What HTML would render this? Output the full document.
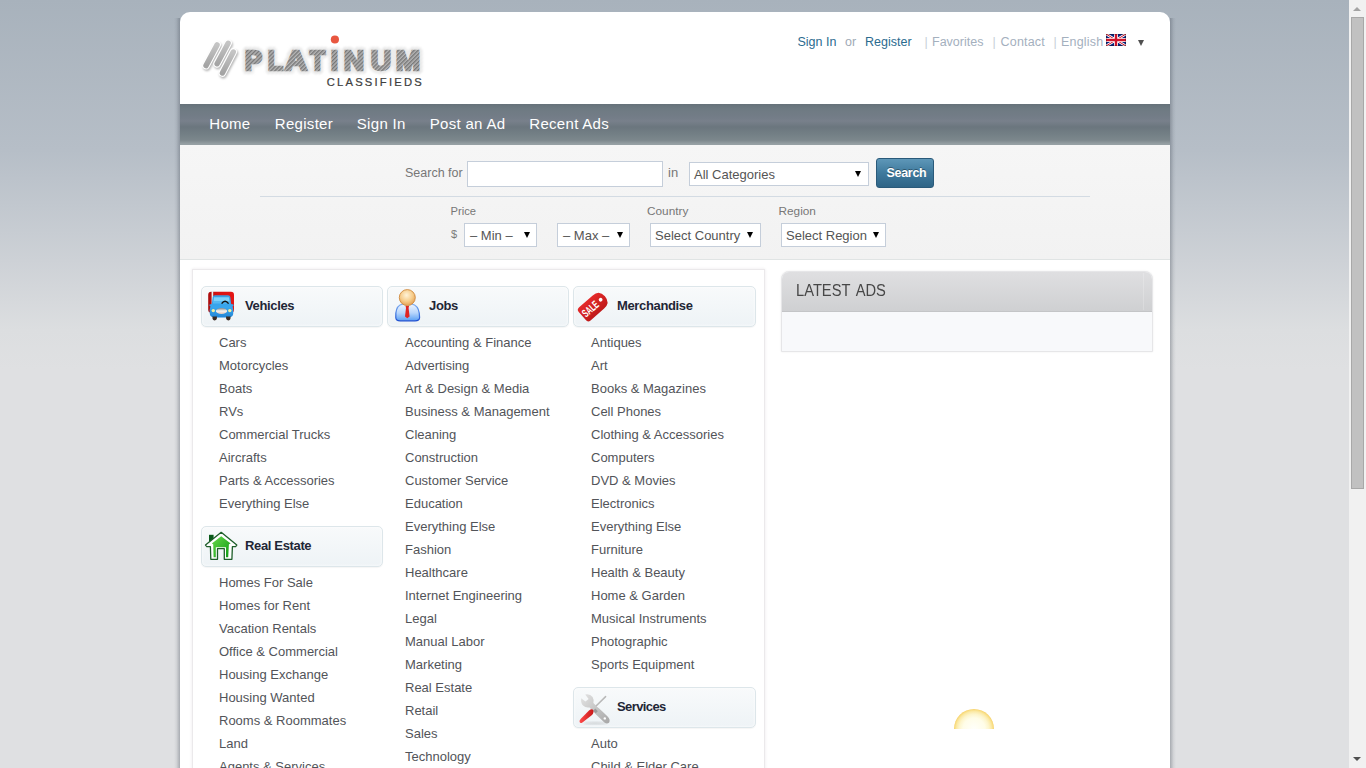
<!DOCTYPE html><html><head><meta charset="utf-8"><title>Platinum Classifieds</title><style>
html,body{margin:0;padding:0;}
body{width:1366px;height:768px;overflow:hidden;position:relative;font-family:"Liberation Sans",sans-serif;
 background:linear-gradient(to bottom,#a8b2bc 0px,#b6bec7 150px,#cdd1d6 260px,#dcdee0 330px,#dfe0e2 370px,#dfe0e2 768px);}
.t{position:absolute;white-space:nowrap;}
.abs{position:absolute;}
#wrap{position:absolute;left:180px;top:12px;width:990px;height:800px;background:#fff;border-radius:10px 10px 0 0;}
.shl{position:absolute;left:174px;top:18px;width:6px;height:760px;background:linear-gradient(to right,rgba(70,78,90,0),rgba(70,78,90,.08) 40%,rgba(70,78,90,.36));}
.shr{position:absolute;left:1170px;top:18px;width:6px;height:760px;background:linear-gradient(to left,rgba(70,78,90,0),rgba(70,78,90,.08) 40%,rgba(70,78,90,.36));}
#nav{position:absolute;left:180px;top:104px;width:990px;height:41px;
 background:linear-gradient(to bottom,#66727a 0px,#6e7a82 5px,#747d88 14px,#78808b 17px,#6b767e 23px,#737f85 30px,#7c878c 36px,#96a0a4 40px,#96a0a4 41px);}
#search{position:absolute;left:180px;top:145px;width:990px;height:114px;background:linear-gradient(#f6f6f6,#f2f2f2);border-bottom:1px solid #e0e4e4;}
.inp{position:absolute;background:#fff;border:1px solid #c5ceda;box-sizing:border-box;}
.sel{position:absolute;background:#fff;border:1px solid #c5ceda;box-sizing:border-box;}
.arr{position:absolute;width:0;height:0;border-left:3.5px solid transparent;border-right:3.5px solid transparent;border-top:6px solid #000;}
.panel{position:absolute;left:192px;top:269px;width:573px;height:600px;background:#fff;border:1px solid #ebe9eb;box-sizing:border-box;box-shadow:0 0 3px rgba(60,30,60,.1);}
.hdr{position:absolute;width:182px;height:41px;box-sizing:border-box;border:1px solid #dde6ea;border-radius:5px;
 background:linear-gradient(#f8fafb,#eef3f6);box-shadow:inset 0 0 3px rgba(255,255,255,.9), 0 1px 1px rgba(0,0,0,.04);}
</style></head><body>
<div class="shl"></div><div class="shr"></div><div id="wrap"></div>
<svg class="abs" style="left:196px;top:30px;" width="240" height="64" viewBox="0 0 240 64"><defs>
<pattern id="stp" patternUnits="userSpaceOnUse" width="2.8" height="2.8" patternTransform="rotate(45)">
<rect width="2.8" height="2.8" fill="#b4b4b4"/><rect width="1.3" height="2.8" fill="#767676"/></pattern>
<pattern id="stp2" patternUnits="userSpaceOnUse" width="2.8" height="2.8" patternTransform="rotate(45)">
<rect width="2.8" height="2.8" fill="#ffffff"/><rect width="1.3" height="2.8" fill="#d0d0d0"/></pattern>
<filter id="bl" x="-20%" y="-50%" width="140%" height="200%"><feGaussianBlur stdDeviation="1.3"/></filter>
<filter id="sh" x="-50%" y="-50%" width="200%" height="200%"><feGaussianBlur stdDeviation="1.1"/></filter>
<linearGradient id="barg" x1="0" y1="0" x2="0" y2="1"><stop offset="0" stop-color="#c4c4c4"/><stop offset="1" stop-color="#a4a4a4"/></linearGradient>
</defs>
<g font-family="Liberation Sans" font-weight="bold" font-size="27.6" fill="url(#stp2)" stroke="url(#stp2)" stroke-width="8" stroke-linejoin="round" filter="url(#bl)"><text x="48.8" y="40.099999999999994" textLength="17.4" lengthAdjust="spacingAndGlyphs">P</text><text x="71.8" y="40.099999999999994" textLength="15.4" lengthAdjust="spacingAndGlyphs">L</text><text x="88.8" y="40.099999999999994" textLength="22.4" lengthAdjust="spacingAndGlyphs">A</text><text x="113.8" y="40.099999999999994" textLength="15.4" lengthAdjust="spacingAndGlyphs">T</text><text x="134.8" y="40.099999999999994" textLength="7.4" lengthAdjust="spacingAndGlyphs">I</text><text x="147.8" y="40.099999999999994" textLength="20.4" lengthAdjust="spacingAndGlyphs">N</text><text x="174.8" y="40.099999999999994" textLength="20.4" lengthAdjust="spacingAndGlyphs">U</text><text x="199.8" y="40.099999999999994" textLength="24.4" lengthAdjust="spacingAndGlyphs">M</text></g>
<g font-family="Liberation Sans" font-weight="bold" font-size="27.6" fill="url(#stp)" stroke="url(#stp)" stroke-width="2.4" stroke-linejoin="miter"><text x="48.8" y="40.099999999999994" textLength="17.4" lengthAdjust="spacingAndGlyphs">P</text><text x="71.8" y="40.099999999999994" textLength="15.4" lengthAdjust="spacingAndGlyphs">L</text><text x="88.8" y="40.099999999999994" textLength="22.4" lengthAdjust="spacingAndGlyphs">A</text><text x="113.8" y="40.099999999999994" textLength="15.4" lengthAdjust="spacingAndGlyphs">T</text><text x="134.8" y="40.099999999999994" textLength="7.4" lengthAdjust="spacingAndGlyphs">I</text><text x="147.8" y="40.099999999999994" textLength="20.4" lengthAdjust="spacingAndGlyphs">N</text><text x="174.8" y="40.099999999999994" textLength="20.4" lengthAdjust="spacingAndGlyphs">U</text><text x="199.8" y="40.099999999999994" textLength="24.4" lengthAdjust="spacingAndGlyphs">M</text></g>
<g stroke-linecap="round">
<g filter="url(#sh)" stroke="#000" stroke-opacity=".3" stroke-width="7.5"><line x1="11" y1="37.2" x2="22" y2="16.5"/><line x1="22" y1="35.4" x2="33" y2="14.8"/><line x1="27.3" y1="44.6" x2="38.3" y2="23.6"/></g>
<g stroke="#fff" stroke-width="7.6"><line x1="10" y1="35.6" x2="21.1" y2="14.9"/><line x1="21.1" y1="33.8" x2="32.1" y2="13.2"/><line x1="26.4" y1="43" x2="37.3" y2="22"/></g>
<g stroke="url(#barg)" stroke-width="5.4"><line x1="10" y1="35.6" x2="21.1" y2="14.9"/><line x1="21.1" y1="33.8" x2="32.1" y2="13.2"/><line x1="26.4" y1="43" x2="37.3" y2="22"/></g>
</g>
<circle cx="138.89999999999998" cy="9.5" r="4.1" fill="#e8563f"/>
<text x="130.7" y="56.2" font-family="Liberation Sans" font-size="11.2" fill="#3e3e3e" stroke="#3e3e3e" stroke-width=".22" textLength="95" lengthAdjust="spacing">CLASSIFIEDS</text>
</svg>
<div class="t" style="left:797.5px;top:35.75px;font-size:12.5px;line-height:12.5px;color:#2b6b8f;">Sign In</div>
<div class="t" style="left:845px;top:35.75px;font-size:12.5px;line-height:12.5px;color:#a0aab6;">or</div>
<div class="t" style="left:865px;top:35.75px;font-size:12.5px;line-height:12.5px;color:#2b6b8f;">Register</div>
<div class="t" style="left:924.5px;top:35.75px;font-size:12.5px;line-height:12.5px;color:#c8d0d8;">|</div>
<div class="t" style="left:932px;top:35.75px;font-size:12.5px;line-height:12.5px;color:#a4b0be;">Favorites</div>
<div class="t" style="left:992.5px;top:35.75px;font-size:12.5px;line-height:12.5px;color:#c8d0d8;">|</div>
<div class="t" style="left:1000.5px;top:35.75px;font-size:12.5px;line-height:12.5px;color:#a4b0be;letter-spacing:0.2px;">Contact</div>
<div class="t" style="left:1053.5px;top:35.75px;font-size:12.5px;line-height:12.5px;color:#c8d0d8;">|</div>
<div class="t" style="left:1061px;top:35.75px;font-size:12.5px;line-height:12.5px;color:#a4b0be;letter-spacing:0.2px;">English</div>
<svg class="abs" style="left:1106px;top:34px;" width="20" height="12" viewBox="0 0 20 12"><clipPath id="fc"><rect width="20" height="12"/></clipPath>
<g clip-path="url(#fc)"><rect width="20" height="12" fill="#00247d"/>
<path d="M0,0 L20,12 M20,0 L0,12" stroke="#fff" stroke-width="2.6"/>
<path d="M0,0 L20,12 M20,0 L0,12" stroke="#cf142b" stroke-width="1"/>
<path d="M10,0 V12 M0,6 H20" stroke="#fff" stroke-width="4"/>
<path d="M10,0 V12 M0,6 H20" stroke="#cf142b" stroke-width="2.4"/>
<rect x=".25" y=".25" width="19.5" height="11.5" fill="none" stroke="#300" stroke-opacity=".5" stroke-width=".5"/></g></svg>
<div class="abs" style="left:1138px;top:40px;width:0;height:0;border-left:3.5px solid transparent;border-right:3.5px solid transparent;border-top:6px solid #505050;"></div>
<div id="nav"></div>
<div class="t" style="left:209.3px;top:116.0px;font-size:15px;line-height:15px;color:#fff;letter-spacing:0.3px;">Home</div>
<div class="t" style="left:274.8px;top:116.0px;font-size:15px;line-height:15px;color:#fff;letter-spacing:0.3px;">Register</div>
<div class="t" style="left:356.8px;top:116.0px;font-size:15px;line-height:15px;color:#fff;letter-spacing:0.3px;">Sign In</div>
<div class="t" style="left:429.8px;top:116.0px;font-size:15px;line-height:15px;color:#fff;letter-spacing:0.3px;">Post an Ad</div>
<div class="t" style="left:529.3px;top:116.0px;font-size:15px;line-height:15px;color:#fff;letter-spacing:0.3px;">Recent Ads</div>
<div id="search"></div>
<div class="t" style="left:405px;top:166.75px;font-size:12.5px;line-height:12.5px;color:#777;">Search for</div>
<div class="inp" style="left:467px;top:161px;width:196px;height:26px;"></div>
<div class="t" style="left:668px;top:166.0px;font-size:13px;line-height:13px;color:#777;">in</div>
<div class="sel" style="left:689px;top:162px;width:180px;height:24px;"></div>
<div class="t" style="left:694px;top:168.0px;font-size:13px;line-height:13px;color:#555;">All Categories</div>
<div class="arr" style="left:855px;top:171px;"></div>
<div id="sbtn" class="abs" style="left:876px;top:158px;width:58px;height:30px;box-sizing:border-box;border:1px solid #2a5a7a;border-radius:3px;background:linear-gradient(#5e97b8,#3f7a9d 50%,#2f6587);"></div>
<div class="t" style="left:886.5px;top:166.75px;font-size:12.5px;line-height:12.5px;color:#fff;font-weight:bold;letter-spacing:-0.3px;text-shadow:0 -1px 0 rgba(0,0,0,.35);">Search</div>
<div class="abs" style="left:260px;top:196px;width:830px;height:1px;background:#d3dbe3;"></div>
<div class="t" style="left:450.5px;top:206.4px;font-size:11.2px;line-height:11.2px;color:#777;">Price</div>
<div class="t" style="left:451px;top:229.0px;font-size:11px;line-height:11px;color:#7a7a7a;">$</div>
<div class="sel" style="left:464px;top:223px;width:73px;height:24px;"></div>
<div class="t" style="left:470px;top:229.0px;font-size:13px;line-height:13px;color:#555;">– Min –</div>
<div class="arr" style="left:524px;top:232px;"></div>
<div class="sel" style="left:557px;top:223px;width:73px;height:24px;"></div>
<div class="t" style="left:563px;top:229.0px;font-size:13px;line-height:13px;color:#555;">– Max –</div>
<div class="arr" style="left:617px;top:232px;"></div>
<div class="t" style="left:647px;top:206.1px;font-size:11.8px;line-height:11.8px;color:#777;">Country</div>
<div class="sel" style="left:650px;top:223px;width:111px;height:24px;"></div>
<div class="t" style="left:655px;top:229.0px;font-size:13px;line-height:13px;color:#555;">Select Country</div>
<div class="arr" style="left:747px;top:232px;"></div>
<div class="t" style="left:778.5px;top:206.1px;font-size:11.8px;line-height:11.8px;color:#777;">Region</div>
<div class="sel" style="left:781px;top:223px;width:105px;height:24px;"></div>
<div class="t" style="left:786px;top:229.0px;font-size:13px;line-height:13px;color:#555;">Select Region</div>
<div class="arr" style="left:873px;top:232px;"></div>
<div class="panel"></div>
<div class="hdr" style="left:201px;top:286px;width:182px;"></div>

<div class="t" style="left:245px;top:299.0px;font-size:13px;line-height:13px;color:#1f2636;font-weight:bold;letter-spacing:-0.35px;">Vehicles</div>
<svg class="abs" style="left:204px;top:288px;" width="36" height="36" viewBox="0 0 36 36"><defs>
<linearGradient id="trr" x1="0" y1="0" x2="1" y2="0"><stop offset="0" stop-color="#a80c0c"/><stop offset=".35" stop-color="#d81212"/><stop offset="1" stop-color="#e41616"/></linearGradient>
<linearGradient id="trb" x1="0" y1="0" x2="0" y2="1"><stop offset="0" stop-color="#3a9fe4"/><stop offset=".55" stop-color="#38a6ee"/><stop offset="1" stop-color="#2386d6"/></linearGradient>
<linearGradient id="trg" x1="0" y1="0" x2="0" y2="1"><stop offset="0" stop-color="#8a8a8a"/><stop offset=".5" stop-color="#f4f4f4"/><stop offset="1" stop-color="#e8c8b8"/></linearGradient>
</defs>
<rect x="4.2" y="3.8" width="25.8" height="21" rx="3" fill="url(#trr)"/>
<rect x="7.6" y="3" width="1.6" height="14" fill="#e8eef0"/>
<path d="M8.7,9 Q9,7.3 11,7.3 L24,7.3 Q26,7.3 26.3,9 L27.2,16 L29.5,16.6 L29.5,18 L28.6,18.3 Q29.8,22 29.2,26 Q28.6,29.2 25,29.4 L10,29.4 Q6.4,29.2 5.8,26 Q5.2,22 6.4,18.3 L5.5,18 L5.5,16.6 L7.8,16 Z" fill="url(#trb)"/>
<path d="M10,9.3 L25,9.3 L25.8,15.5 L9.2,15.5 Z" fill="#7fd2fb"/>
<path d="M9.5,13 L25.8,13 L26,16.5 L9.2,16.5 Z" fill="#3aa6ec" opacity=".6"/>
<path d="M17.6,15.6 Q21,11 24.6,15.6" fill="none" stroke="#111" stroke-width="1.4"/>
<circle cx="9.3" cy="22.6" r="1.7" fill="#f4f0a0"/>
<circle cx="25.8" cy="22.6" r="1.7" fill="#f4f0a0"/>
<ellipse cx="17.5" cy="23" rx="5.7" ry="2.9" fill="url(#trg)"/>
<path d="M8.4,28.6 L13,28.6 L12.8,31 Q12,32.4 10.6,32.4 Q9,32.4 8.6,31 Z" fill="#3a2a22"/>
<path d="M22,28.6 L26.6,28.6 L26.4,31 Q26,32.4 24.4,32.4 Q23,32.4 22.2,31 Z" fill="#3a2a22"/></svg>
<div class="t" style="left:219px;top:336.0px;font-size:13px;line-height:13px;color:#525459;">Cars</div>
<div class="t" style="left:219px;top:359.0px;font-size:13px;line-height:13px;color:#525459;">Motorcycles</div>
<div class="t" style="left:219px;top:382.0px;font-size:13px;line-height:13px;color:#525459;">Boats</div>
<div class="t" style="left:219px;top:405.0px;font-size:13px;line-height:13px;color:#525459;">RVs</div>
<div class="t" style="left:219px;top:428.0px;font-size:13px;line-height:13px;color:#525459;">Commercial Trucks</div>
<div class="t" style="left:219px;top:451.0px;font-size:13px;line-height:13px;color:#525459;">Aircrafts</div>
<div class="t" style="left:219px;top:474.0px;font-size:13px;line-height:13px;color:#525459;">Parts &amp; Accessories</div>
<div class="t" style="left:219px;top:497.0px;font-size:13px;line-height:13px;color:#525459;">Everything Else</div>
<div class="hdr" style="left:201px;top:526px;width:182px;"></div>

<div class="t" style="left:245px;top:539.0px;font-size:13px;line-height:13px;color:#1f2636;font-weight:bold;letter-spacing:-0.35px;">Real Estate</div>
<svg class="abs" style="left:202px;top:528px;" width="36" height="36" viewBox="0 0 36 36"><defs>
<linearGradient id="hg" x1="0" y1="0" x2="1" y2="1"><stop offset="0" stop-color="#6ad84c"/><stop offset="1" stop-color="#0c9a12"/></linearGradient>
</defs>
<rect x="7" y="6.8" width="4.6" height="7" fill="#0a5a1a"/>
<path d="M19.2,4.3 L34.8,17.1 L33.6,18.6 L30.4,18.6 L29.9,31.3 L22.3,31.3 L22.3,20.7 L15.5,20.7 L15.5,31.3 L8.8,31.3 L8.4,18.6 L4.8,18.6 L3.5,17.1 Z" fill="#fff" stroke="#1e5e2a" stroke-width="1.3" stroke-linejoin="round"/>
<path d="M19.2,8.2 L28.7,15.6 L26.9,16.3 L26.2,29.2 L24,29.2 L24,19.2 L13.8,19.2 L13.8,29.2 L11.6,29.2 L11.2,16.3 L9.8,15.6 Z" fill="url(#hg)"/></svg>
<div class="t" style="left:219px;top:576.0px;font-size:13px;line-height:13px;color:#525459;">Homes For Sale</div>
<div class="t" style="left:219px;top:599.0px;font-size:13px;line-height:13px;color:#525459;">Homes for Rent</div>
<div class="t" style="left:219px;top:622.0px;font-size:13px;line-height:13px;color:#525459;">Vacation Rentals</div>
<div class="t" style="left:219px;top:645.0px;font-size:13px;line-height:13px;color:#525459;">Office &amp; Commercial</div>
<div class="t" style="left:219px;top:668.0px;font-size:13px;line-height:13px;color:#525459;">Housing Exchange</div>
<div class="t" style="left:219px;top:691.0px;font-size:13px;line-height:13px;color:#525459;">Housing Wanted</div>
<div class="t" style="left:219px;top:714.0px;font-size:13px;line-height:13px;color:#525459;">Rooms &amp; Roommates</div>
<div class="t" style="left:219px;top:737.0px;font-size:13px;line-height:13px;color:#525459;">Land</div>
<div class="t" style="left:219px;top:760.0px;font-size:13px;line-height:13px;color:#525459;">Agents &amp; Services</div>
<div class="hdr" style="left:387px;top:286px;width:182px;"></div>

<div class="t" style="left:429px;top:299.0px;font-size:13px;line-height:13px;color:#1f2636;font-weight:bold;letter-spacing:-0.35px;">Jobs</div>
<svg class="abs" style="left:390px;top:288px;" width="36" height="36" viewBox="0 0 36 36"><defs>
<radialGradient id="ph" cx=".45" cy=".35" r=".65"><stop offset="0" stop-color="#fff3d8"/><stop offset=".6" stop-color="#f6cc8a"/><stop offset="1" stop-color="#e3a055"/></radialGradient>
<linearGradient id="pb" x1="0" y1="0" x2="0" y2="1"><stop offset="0" stop-color="#f4f8ff"/><stop offset=".55" stop-color="#b8d6fc"/><stop offset="1" stop-color="#5aa0f4"/></linearGradient>
<linearGradient id="pbs" x1="0" y1="0" x2="0" y2="1"><stop offset="0" stop-color="#8ab4f0"/><stop offset=".5" stop-color="#4a82e4"/><stop offset="1" stop-color="#1f4fd0"/></linearGradient>
</defs>
<path d="M5.8,29.5 Q5.2,20 10,17 Q13,15.3 17.3,15.3 Q21.6,15.3 24.6,17 Q29.6,20 29.6,29.5 Q29.6,32.8 25,32.8 L10.2,32.8 Q5.8,32.8 5.8,29.5 Z" fill="url(#pb)" stroke="url(#pbs)" stroke-width="1.2"/>
<path d="M15.5,17.8 L19.1,17.8 L18.6,20 L19.6,28.6 L17.3,30.3 L15,28.6 L16,20 Z" fill="#e02424"/>
<circle cx="17.3" cy="9.6" r="8" fill="url(#ph)" stroke="#cf8a40" stroke-width="0.9"/></svg>
<div class="t" style="left:405px;top:336.0px;font-size:13px;line-height:13px;color:#525459;">Accounting &amp; Finance</div>
<div class="t" style="left:405px;top:359.0px;font-size:13px;line-height:13px;color:#525459;">Advertising</div>
<div class="t" style="left:405px;top:382.0px;font-size:13px;line-height:13px;color:#525459;">Art &amp; Design &amp; Media</div>
<div class="t" style="left:405px;top:405.0px;font-size:13px;line-height:13px;color:#525459;">Business &amp; Management</div>
<div class="t" style="left:405px;top:428.0px;font-size:13px;line-height:13px;color:#525459;">Cleaning</div>
<div class="t" style="left:405px;top:451.0px;font-size:13px;line-height:13px;color:#525459;">Construction</div>
<div class="t" style="left:405px;top:474.0px;font-size:13px;line-height:13px;color:#525459;">Customer Service</div>
<div class="t" style="left:405px;top:497.0px;font-size:13px;line-height:13px;color:#525459;">Education</div>
<div class="t" style="left:405px;top:520.0px;font-size:13px;line-height:13px;color:#525459;">Everything Else</div>
<div class="t" style="left:405px;top:543.0px;font-size:13px;line-height:13px;color:#525459;">Fashion</div>
<div class="t" style="left:405px;top:566.0px;font-size:13px;line-height:13px;color:#525459;">Healthcare</div>
<div class="t" style="left:405px;top:589.0px;font-size:13px;line-height:13px;color:#525459;">Internet Engineering</div>
<div class="t" style="left:405px;top:612.0px;font-size:13px;line-height:13px;color:#525459;">Legal</div>
<div class="t" style="left:405px;top:635.0px;font-size:13px;line-height:13px;color:#525459;">Manual Labor</div>
<div class="t" style="left:405px;top:658.0px;font-size:13px;line-height:13px;color:#525459;">Marketing</div>
<div class="t" style="left:405px;top:681.0px;font-size:13px;line-height:13px;color:#525459;">Real Estate</div>
<div class="t" style="left:405px;top:704.0px;font-size:13px;line-height:13px;color:#525459;">Retail</div>
<div class="t" style="left:405px;top:727.0px;font-size:13px;line-height:13px;color:#525459;">Sales</div>
<div class="t" style="left:405px;top:750.0px;font-size:13px;line-height:13px;color:#525459;">Technology</div>
<div class="hdr" style="left:573px;top:286px;width:183px;"></div>

<div class="t" style="left:617px;top:299.0px;font-size:13px;line-height:13px;color:#1f2636;font-weight:bold;letter-spacing:-0.35px;">Merchandise</div>
<svg class="abs" style="left:576px;top:288px;" width="36" height="36" viewBox="0 0 36 36"><defs>
<linearGradient id="tg" x1="0" y1="0" x2="0" y2="1"><stop offset="0" stop-color="#e42a2a"/><stop offset="1" stop-color="#bf1a1a"/></linearGradient>
</defs>
<g transform="translate(17.6,18.2) rotate(-41)">
<path d="M-15,-5.4 Q-15,-8.7 -11.6,-8.7 L6.4,-8.7 Q15,-8.7 15,0 Q15,8.7 6.4,8.7 L-11.6,8.7 Q-15,8.7 -15,5.4 Z" fill="url(#tg)"/>
<circle cx="9.6" cy="-0.3" r="1.9" fill="#fff"/>
<text x="-13.2" y="3.7" font-family="Liberation Sans" font-weight="bold" font-size="11.2" fill="#fff" textLength="18" lengthAdjust="spacingAndGlyphs">SALE</text>
</g></svg>
<div class="t" style="left:591px;top:336.0px;font-size:13px;line-height:13px;color:#525459;">Antiques</div>
<div class="t" style="left:591px;top:359.0px;font-size:13px;line-height:13px;color:#525459;">Art</div>
<div class="t" style="left:591px;top:382.0px;font-size:13px;line-height:13px;color:#525459;">Books &amp; Magazines</div>
<div class="t" style="left:591px;top:405.0px;font-size:13px;line-height:13px;color:#525459;">Cell Phones</div>
<div class="t" style="left:591px;top:428.0px;font-size:13px;line-height:13px;color:#525459;">Clothing &amp; Accessories</div>
<div class="t" style="left:591px;top:451.0px;font-size:13px;line-height:13px;color:#525459;">Computers</div>
<div class="t" style="left:591px;top:474.0px;font-size:13px;line-height:13px;color:#525459;">DVD &amp; Movies</div>
<div class="t" style="left:591px;top:497.0px;font-size:13px;line-height:13px;color:#525459;">Electronics</div>
<div class="t" style="left:591px;top:520.0px;font-size:13px;line-height:13px;color:#525459;">Everything Else</div>
<div class="t" style="left:591px;top:543.0px;font-size:13px;line-height:13px;color:#525459;">Furniture</div>
<div class="t" style="left:591px;top:566.0px;font-size:13px;line-height:13px;color:#525459;">Health &amp; Beauty</div>
<div class="t" style="left:591px;top:589.0px;font-size:13px;line-height:13px;color:#525459;">Home &amp; Garden</div>
<div class="t" style="left:591px;top:612.0px;font-size:13px;line-height:13px;color:#525459;">Musical Instruments</div>
<div class="t" style="left:591px;top:635.0px;font-size:13px;line-height:13px;color:#525459;">Photographic</div>
<div class="t" style="left:591px;top:658.0px;font-size:13px;line-height:13px;color:#525459;">Sports Equipment</div>
<div class="hdr" style="left:573px;top:687px;width:183px;"></div>

<div class="t" style="left:617px;top:700.0px;font-size:13px;line-height:13px;color:#1f2636;font-weight:bold;letter-spacing:-0.6px;">Services</div>
<svg class="abs" style="left:576px;top:690px;" width="36" height="36" viewBox="0 0 36 36"><defs>
<linearGradient id="wg" x1="0" y1="0" x2="1" y2="1"><stop offset="0" stop-color="#e4e4e4"/><stop offset="1" stop-color="#a6a6a6"/></linearGradient>
<linearGradient id="rg" x1="0" y1="0" x2="1" y2="0"><stop offset="0" stop-color="#ff4a4a"/><stop offset="1" stop-color="#c81818"/></linearGradient>
<filter id="tsh"><feGaussianBlur stdDeviation="1"/></filter>
</defs>
<ellipse cx="19" cy="33.3" rx="12" ry="1.3" fill="#000" opacity=".13" filter="url(#tsh)"/>
<line x1="29.6" y1="6.6" x2="17" y2="19" stroke="#b8b8b8" stroke-width="1.5" stroke-linecap="round"/>
<path d="M9.2,4.4 Q14,3.4 16.6,7 Q18.2,9.8 17.4,13 L21,16.8 Q25,20 31.6,26.6 Q34.6,29.6 33.2,32.4 Q31.2,34.4 28.4,32.6 L20,24.4 L13.6,17.4 Q9.8,18.2 7,15.6 Q4.6,13 5.2,8.2 L9.4,11.6 L12.6,9 Z" fill="url(#wg)"/>
<circle cx="28.8" cy="28.4" r="1.2" fill="#fff"/>
<path d="M18.2,19.6 L20.8,22.2" stroke="#9a9a9a" stroke-width="3"/>
<path d="M17,19.8 Q18.4,22.4 16,25 L6.4,32.4 Q4.4,33.6 3.6,32 Q3.2,30.6 4.6,29 L13,20.6 Q15.4,18.6 17,19.8 Z" fill="url(#rg)"/></svg>
<div class="t" style="left:591px;top:737.0px;font-size:13px;line-height:13px;color:#525459;">Auto</div>
<div class="t" style="left:591px;top:760.0px;font-size:13px;line-height:13px;color:#525459;">Child &amp; Elder Care</div>
<div class="abs" style="left:781px;top:271px;width:372px;height:81px;box-sizing:border-box;border:1px solid #e6e6e8;border-radius:8px 8px 0 0;background:#f8f9fb;box-shadow:0 0 2px rgba(0,0,0,.08);"></div>
<div class="abs" style="left:782px;top:272px;width:370px;height:39px;border-radius:7px 7px 0 0;background:linear-gradient(#dfdfe1,#cfd0d2);border-bottom:1px solid #c4c5c7;"></div>
<div class="abs" style="left:1143px;top:273px;width:1px;height:37px;background:rgba(255,255,255,.2);"></div>
<div class="t" style="left:796.3px;top:282.5px;font-size:16px;line-height:16px;color:#474747;word-spacing:2.5px;transform:scaleX(.918);transform-origin:0 0;">LATEST ADS</div>
<div class="abs" style="left:954px;top:709px;width:40px;height:20px;overflow:hidden;"><div style="width:40px;height:40px;border-radius:50%;background:radial-gradient(circle closest-side at 50% 50%,#fffffa 0%,#fffde8 55%,#fdf5cc 74%,#fbeaa8 87%,#f9de84 95%,#f6d068 100%);"></div></div>
<div class="abs" style="left:1349px;top:0;width:17px;height:768px;background:#f1f1f1;"></div>
<div class="abs" style="left:1353px;top:7px;width:0;height:0;border-left:4px solid transparent;border-right:4px solid transparent;border-bottom:4px solid #a3a3a3;"></div>
<div class="abs" style="left:1351px;top:17px;width:13px;height:472px;box-sizing:border-box;background:#c1c1c1;border:1px solid #a8a8a8;"></div>
<div class="abs" style="left:1353px;top:757px;width:0;height:0;border-left:4px solid transparent;border-right:4px solid transparent;border-top:4px solid #505050;"></div>
</body></html>
